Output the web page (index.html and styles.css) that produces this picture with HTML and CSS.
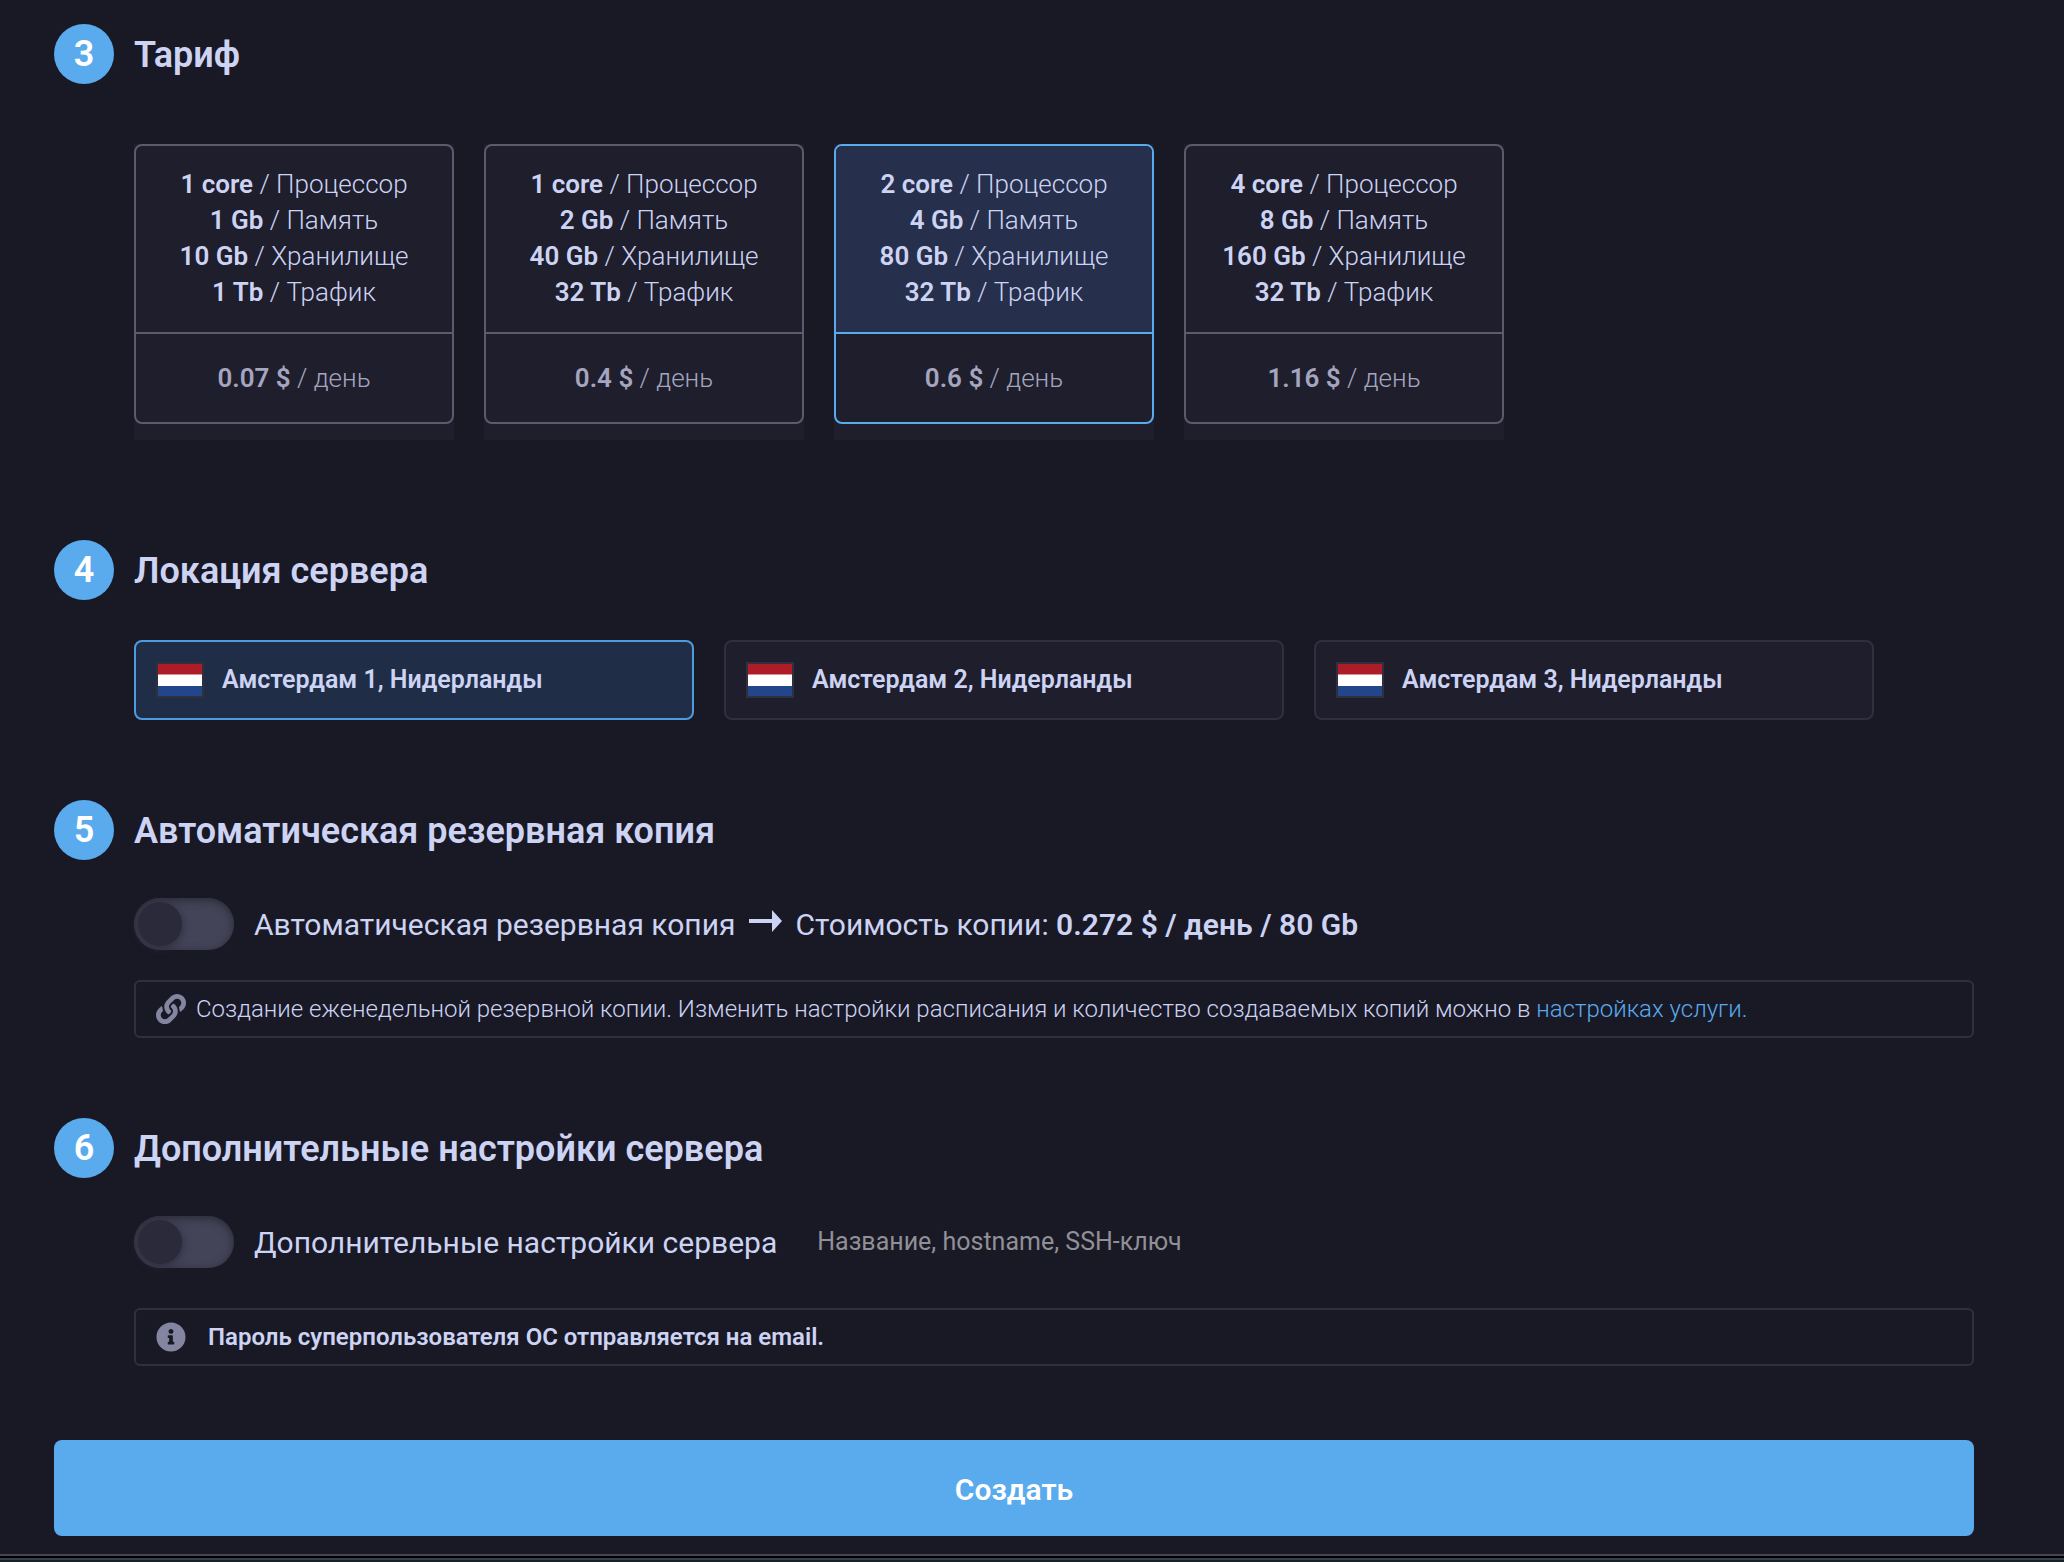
FILE: index.html
```html
<!DOCTYPE html>
<html lang="ru">
<head>
<meta charset="utf-8">
<meta name="viewport" content="width=device-width, initial-scale=1">
<title>Создание сервера</title>
<link rel="stylesheet" href="styles.css">
</head>
<body>
<form class="order">
  <section class="step">
    <header class="step-head"><span class="step-num">3</span><h2 class="step-title">Тариф</h2></header>
    <div class="step-body plans">
      <label class="plan"><input class="hidden-radio" type="radio" name="plan">
        <span class="plan-card">
          <span class="plan-specs"><span><b>1 core</b> / Процессор</span><span><b>1 Gb</b> / Память</span><span><b>10 Gb</b> / Хранилище</span><span><b>1 Tb</b> / Трафик</span></span>
          <span class="plan-price"><span><b>0.07 $</b> / день</span></span>
        </span>
      </label>
      <label class="plan"><input class="hidden-radio" type="radio" name="plan">
        <span class="plan-card">
          <span class="plan-specs"><span><b>1 core</b> / Процессор</span><span><b>2 Gb</b> / Память</span><span><b>40 Gb</b> / Хранилище</span><span><b>32 Tb</b> / Трафик</span></span>
          <span class="plan-price"><span><b>0.4 $</b> / день</span></span>
        </span>
      </label>
      <label class="plan"><input class="hidden-radio" type="radio" name="plan" checked>
        <span class="plan-card">
          <span class="plan-specs"><span><b>2 core</b> / Процессор</span><span><b>4 Gb</b> / Память</span><span><b>80 Gb</b> / Хранилище</span><span><b>32 Tb</b> / Трафик</span></span>
          <span class="plan-price"><span><b>0.6 $</b> / день</span></span>
        </span>
      </label>
      <label class="plan"><input class="hidden-radio" type="radio" name="plan">
        <span class="plan-card">
          <span class="plan-specs"><span><b>4 core</b> / Процессор</span><span><b>8 Gb</b> / Память</span><span><b>160 Gb</b> / Хранилище</span><span><b>32 Tb</b> / Трафик</span></span>
          <span class="plan-price"><span><b>1.16 $</b> / день</span></span>
        </span>
      </label>
    </div>
  </section>

  <section class="step">
    <header class="step-head"><span class="step-num">4</span><h2 class="step-title">Локация сервера</h2></header>
    <div class="step-body places">
      <label class="place"><input class="hidden-radio" type="radio" name="place" checked>
        <span class="place-card"><svg class="flag" viewBox="0 0 44 32" aria-hidden="true"><path fill="#ae1c28" d="M0 0h44v11H0z"/><path fill="#fff" d="M0 10.500h44v11.500H0z"/><path fill="#21468b" d="M0 22h44v10H0z"/></svg>Амстердам 1, Нидерланды</span>
      </label>
      <label class="place"><input class="hidden-radio" type="radio" name="place">
        <span class="place-card"><svg class="flag" viewBox="0 0 44 32" aria-hidden="true"><path fill="#ae1c28" d="M0 0h44v11H0z"/><path fill="#fff" d="M0 10.500h44v11.500H0z"/><path fill="#21468b" d="M0 22h44v10H0z"/></svg>Амстердам 2, Нидерланды</span>
      </label>
      <label class="place"><input class="hidden-radio" type="radio" name="place">
        <span class="place-card"><svg class="flag" viewBox="0 0 44 32" aria-hidden="true"><path fill="#ae1c28" d="M0 0h44v11H0z"/><path fill="#fff" d="M0 10.500h44v11.500H0z"/><path fill="#21468b" d="M0 22h44v10H0z"/></svg>Амстердам 3, Нидерланды</span>
      </label>
    </div>
  </section>

  <section class="step">
    <header class="step-head"><span class="step-num">5</span><h2 class="step-title">Автоматическая резервная копия</h2></header>
    <div class="step-body">
      <div class="option">
        <input class="toggle" type="checkbox" id="backup">
        <label class="option-label" for="backup">Автоматическая резервная копия</label>
        <svg class="arrow" viewBox="0 0 34 26" aria-hidden="true"><path fill="currentColor" d="M0 11h23V2l10 11-10 11V15H0z"/></svg>
        <span class="option-label">Стоимость копии: <b>0.272 $ / день / 80 Gb</b></span>
      </div>
      <p class="note note-link">
        <svg class="note-icon" viewBox="0 0 512 512" aria-hidden="true"><path fill="currentColor" d="M326.612 185.391c59.747 59.809 58.927 155.698.36 214.590-.11.120-.240.250-.360.370l-67.200 67.200c-59.270 59.270-155.699 59.262-214.960 0-59.270-59.260-59.270-155.700 0-214.960l37.106-37.106c9.840-9.840 26.786-3.300 27.294 10.606.648 17.722 3.826 35.527 9.690 52.721 1.986 5.822.567 12.262-3.783 16.612l-13.087 13.087c-28.026 28.026-28.905 73.660-1.155 101.960 28.024 28.579 74.086 28.749 102.325.510l67.200-67.190c28.191-28.191 28.073-73.757 0-101.830-3.701-3.694-7.429-6.564-10.341-8.569a16.037 16.037 0 0 1-6.947-12.606c-.396-10.567 3.348-21.456 11.698-29.806l21.054-21.055c5.521-5.521 14.182-6.199 20.584-1.731a152.482 152.482 0 0 1 20.522 17.197zM467.547 44.449c-59.261-59.262-155.690-59.270-214.960 0l-67.200 67.200c-.120.120-.250.250-.360.370-58.566 58.892-59.387 154.781.360 214.590a152.454 152.454 0 0 0 20.521 17.196c6.402 4.468 15.064 3.789 20.584-1.731l21.054-21.055c8.350-8.350 12.094-19.239 11.698-29.806a16.037 16.037 0 0 0-6.947-12.606c-2.912-2.005-6.640-4.875-10.341-8.569-28.073-28.073-28.191-73.639 0-101.830l67.200-67.190c28.239-28.239 74.300-28.069 102.325.510 27.750 28.300 26.872 73.934-1.155 101.960l-13.087 13.087c-4.350 4.350-5.769 10.790-3.783 16.612 5.864 17.194 9.042 34.999 9.690 52.721.509 13.906 17.454 20.446 27.294 10.606l37.106-37.106c59.271-59.259 59.271-155.699.001-214.959z"/></svg>
        <span>Создание еженедельной резервной копии. Изменить настройки расписания и количество создаваемых копий можно в <a class="link" href="#">настройках услуги.</a></span>
      </p>
    </div>
  </section>

  <section class="step">
    <header class="step-head"><span class="step-num">6</span><h2 class="step-title">Дополнительные настройки сервера</h2></header>
    <div class="step-body">
      <div class="option">
        <input class="toggle" type="checkbox" id="extra">
        <label class="option-label" for="extra">Дополнительные настройки сервера</label>
        <span class="option-hint">Название, hostname, SSH-ключ</span>
      </div>
      <p class="note note-info">
        <svg class="note-icon" viewBox="0 0 512 512" aria-hidden="true"><path fill="currentColor" d="M256 8C119 8 8 119 8 256s111 248 248 248 248-111 248-248S393 8 256 8zm0 110c23 0 42 19 42 42s-19 42-42 42-42-19-42-42 19-42 42-42zm56 254c0 7-5 12-12 12h-88c-7 0-12-5-12-12v-24c0-7 5-12 12-12h12v-64h-12c-7 0-12-5-12-12v-24c0-7 5-12 12-12h64c7 0 12 5 12 12v100h12c7 0 12 5 12 12v24z"/></svg>
        <span>Пароль суперпользователя ОС отправляется на email.</span>
      </p>
    </div>
  </section>

  <button class="submit" type="submit">Создать</button>
</form>
<footer class="edge"></footer>
</body>
</html>
```
FILE: styles.css
```css
* { box-sizing: border-box; }
body {
  margin: 0;
  background: #191925;
  color: #cdd3f3;
  font-family: Roboto, "Noto Sans", sans-serif;
  font-size: 26px;
  line-height: 36px;
}
b { font-weight: 600; }
.order { padding: 24px 90px 18px 54px; }
.step-head { display: flex; align-items: center; gap: 20px; }
.step-num {
  width: 60px;
  height: 60px;
  flex: none;
  border-radius: 50%;
  background: #5aaaee;
  color: #fff;
  font-size: 36px;
  font-weight: 600;
  line-height: 60px;
  text-align: center;
}
.step-title { margin: 0; padding-top: 2px; font-size: 36px; font-weight: 600; line-height: 48px; }
.step-body { padding-left: 80px; }
.hidden-radio {
  position: absolute;
  width: 1px;
  height: 1px;
  margin: 0;
  opacity: 0;
}

.plans { display: flex; flex-wrap: wrap; gap: 30px; margin: 60px 0 100px; }
.plan { width: 320px; padding-bottom: 16px; background: #1e1e2d; font-weight: 300; text-align: center; cursor: pointer; }
.plan-card { display: block; overflow: hidden; border: 2px solid #5c5b6c; border-radius: 8px; }
.plan-specs { display: flex; flex-direction: column; padding: 20px 0 22px; border-bottom: 2px solid #5c5b6c; }
.plan-price { display: block; padding: 26px 0; color: #a5a5bf; }
.hidden-radio:checked + .plan-card { border-color: #5aaaee; }
.hidden-radio:checked + .plan-card .plan-specs { border-color: #5aaaee; background: #262f4b; }

.places { display: flex; flex-wrap: wrap; gap: 30px; margin: 40px 0 80px; }
.place { width: 560px; cursor: pointer; }
.place-card {
  display: flex;
  align-items: center;
  gap: 18px;
  height: 80px;
  padding: 0 20px;
  border: 2px solid #2f2f3e;
  border-radius: 8px;
  background: #1e1e2d;
  font-size: 25px;
  font-weight: 600;
}
.hidden-radio:checked + .place-card { border-color: #4e9cde; background: #1f2d47; }
.flag { width: 48px; height: 36px; border: 2px solid #2f2f3e; }

.option { display: flex; align-items: center; margin-top: 38px; }
.toggle {
  appearance: none;
  width: 100px;
  height: 52px;
  margin: 0 20px 0 0;
  border-radius: 26px;
  background: #444459;
  box-shadow: inset 0 2px 8px #272733;
  cursor: pointer;
}
.toggle::before {
  content: "";
  display: block;
  width: 44px;
  height: 44px;
  margin: 4px;
  border-radius: 50%;
  background: #2b2a3a;
  box-shadow: 0 2px 8px #2b2a3a;
}
.toggle:checked::before { margin-left: 52px; }
.option-label { padding-top: 2px; font-size: 30px; line-height: 48px; }
.option-hint { margin-left: 40px; color: #909096; font-size: 25px; }
.arrow { width: 34px; height: 26px; margin: 0 12px 6px 14px; }

.note {
  display: flex;
  align-items: center;
  height: 58px;
  padding: 0 20px;
  border: 2px solid #2f2f3e;
  border-radius: 6px;
  font-size: 24px;
}
.note-icon { width: 30px; height: 30px; flex: none; color: #8485a0; }
.note-link { gap: 10px; margin: 30px 0 80px; font-weight: 300; }
.note-info { gap: 22px; margin: 40px 0 74px; font-weight: 600; }
.link { color: #5aaaee; text-decoration: none; }

.submit {
  display: block;
  width: 100%;
  height: 96px;
  padding: 2px 0 0;
  border: 0;
  border-radius: 8px;
  background: #5aaaee;
  color: #fff;
  font: 600 30px Roboto, "Noto Sans", sans-serif;
  cursor: pointer;
}
.edge { height: 8px; border-top: 2px solid #464555; background: linear-gradient(#000 2px, #343f49 2px, #343f49 4px, #1a2029 4px); }
```
